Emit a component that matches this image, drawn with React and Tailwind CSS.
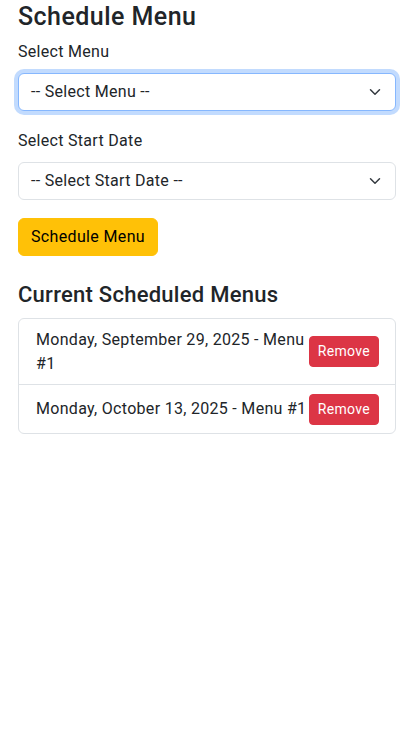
import React from "react";

function Chevron() {
  return (
    <svg width="12" height="12" viewBox="0 0 16 16" className="shrink-0">
      <path d="m2 5 6 6 6-6" fill="none" stroke="#343a40" strokeWidth="2" strokeLinecap="round" strokeLinejoin="round" />
    </svg>
  );
}

function FakeSelect({ text, focused }) {
  return (
    <div
      className={
        "flex items-center justify-between h-[38px] rounded-[6px] border bg-white pl-[12px] pr-[14px] " +
        (focused
          ? "border-[#86b7fe] shadow-[0_0_0_4px_rgba(13,110,253,0.25)]"
          : "border-[#dee2e6]")
      }
    >
      <span className="text-[16px] leading-[24px] tracking-[0.3px] text-[#212529]">{text}</span>
      <Chevron />
    </div>
  );
}

function Row({ text, last }) {
  return (
    <div
      className={
        "flex items-center justify-between px-[16px] py-[8.5px] " +
        (last ? "" : "border-b border-[#dee2e6]")
      }
    >
      <span className="text-[16px] leading-[24px] tracking-[0.3px] text-[#212529] pl-[1px]">{text}</span>
      <button className="shrink-0 rounded-[4px] border border-[#dc3545] bg-[#dc3545] px-[8px] py-[4px] text-[14px] leading-[21px] tracking-[0.3px] text-white">
        Remove
      </button>
    </div>
  );
}

export default function App() {
  return (
    <div className="min-h-[744px] bg-white pl-[18px] pr-[13px] text-[#212529]" style={{ fontFamily: "Roboto, 'Noto Sans', 'Liberation Sans', sans-serif" }}>
      <h2 className="pt-[2px] mb-[8px] text-[25px] leading-[30px] tracking-[0.45px] font-medium">Schedule Menu</h2>
      <label className="block text-[16px] leading-[24px] tracking-[0.3px] mb-[9px]">Select Menu</label>
      <FakeSelect text="-- Select Menu --" focused />
      <label className="block mt-[18px] text-[16px] leading-[24px] tracking-[0.3px] mb-[9px]">Select Start Date</label>
      <FakeSelect text="-- Select Start Date --" />
      <button className="mt-[18px] block h-[38px] rounded-[6px] border border-[#ffc107] bg-[#ffc107] px-[12px] text-[16px] leading-[24px] tracking-[0.35px] text-black">
        Schedule Menu
      </button>
      <h4 className="mt-[26px] mb-[10px] text-[22px] leading-[26px] tracking-[0.26px] font-medium">Current Scheduled Menus</h4>
      <div className="rounded-[6px] border border-[#dee2e6]">
        <Row text="Monday, September 29, 2025 - Menu #1" />
        <Row text="Monday, October 13, 2025 - Menu #1" last />
      </div>
    </div>
  );
}
